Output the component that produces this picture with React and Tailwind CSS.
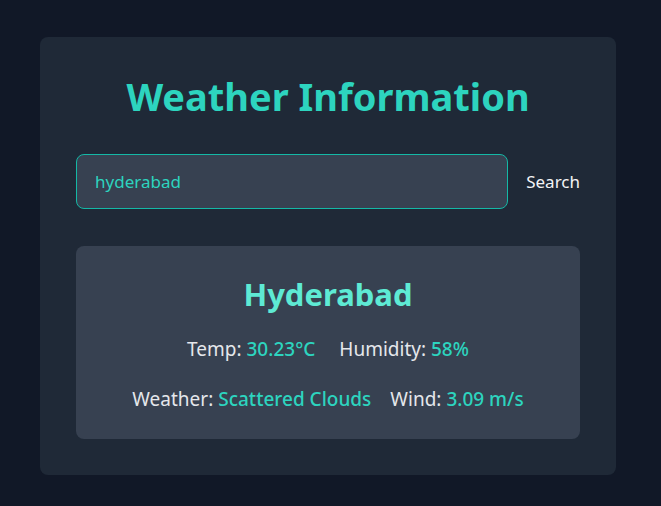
import { useState } from 'react';

const font = { fontFamily: '"Noto Sans", "Open Sans", sans-serif' };

function Stat({ label, value }) {
  return (
    <span className="text-gray-200">
      {label}: <span className="text-[#2dd4bf] font-medium">{value}</span>
    </span>
  );
}

export default function App() {
  const [city, setCity] = useState('hyderabad');

  return (
    <div className="min-h-screen bg-[#111827] pt-[37px] pl-[40px]" style={font}>
      <div className="w-[576px] h-[438px] bg-[#1f2937] rounded-lg p-[36px]">
        {/* Title */}
        <h1 className="text-[38px] leading-[46px] font-bold text-[#2dd4bf] text-center mb-[35px]">
          Weather Information
        </h1>

        {/* Search */}
        <div className="flex items-center gap-[18px]">
          <input
            value={city}
            onChange={(e) => setCity(e.target.value)}
            className="w-[433px] h-[55px] bg-[#374151] border border-[#14b8a6] rounded-lg px-[18px] text-[17px] text-[#2dd4bf] outline-none"
          />
          <button className="text-[17px] text-gray-100">Search</button>
        </div>

        {/* Result */}
        <div className="mt-[37px] h-[193px] bg-[#374151] rounded-lg pt-[29px] text-center">
          <h2 className="text-[31px] leading-[38px] font-bold text-[#5eead4]">Hyderabad</h2>
          <div className="flex justify-center gap-[24px] text-[19px] leading-[28px] mt-[22px]">
            <Stat label="Temp" value="30.23°C" />
            <Stat label="Humidity" value="58%" />
          </div>
          <div className="flex justify-center gap-[19px] text-[19px] leading-[28px] mt-[22px]">
            <Stat label="Weather" value="Scattered Clouds" />
            <Stat label="Wind" value="3.09 m/s" />
          </div>
        </div>
      </div>
    </div>
  );
}
